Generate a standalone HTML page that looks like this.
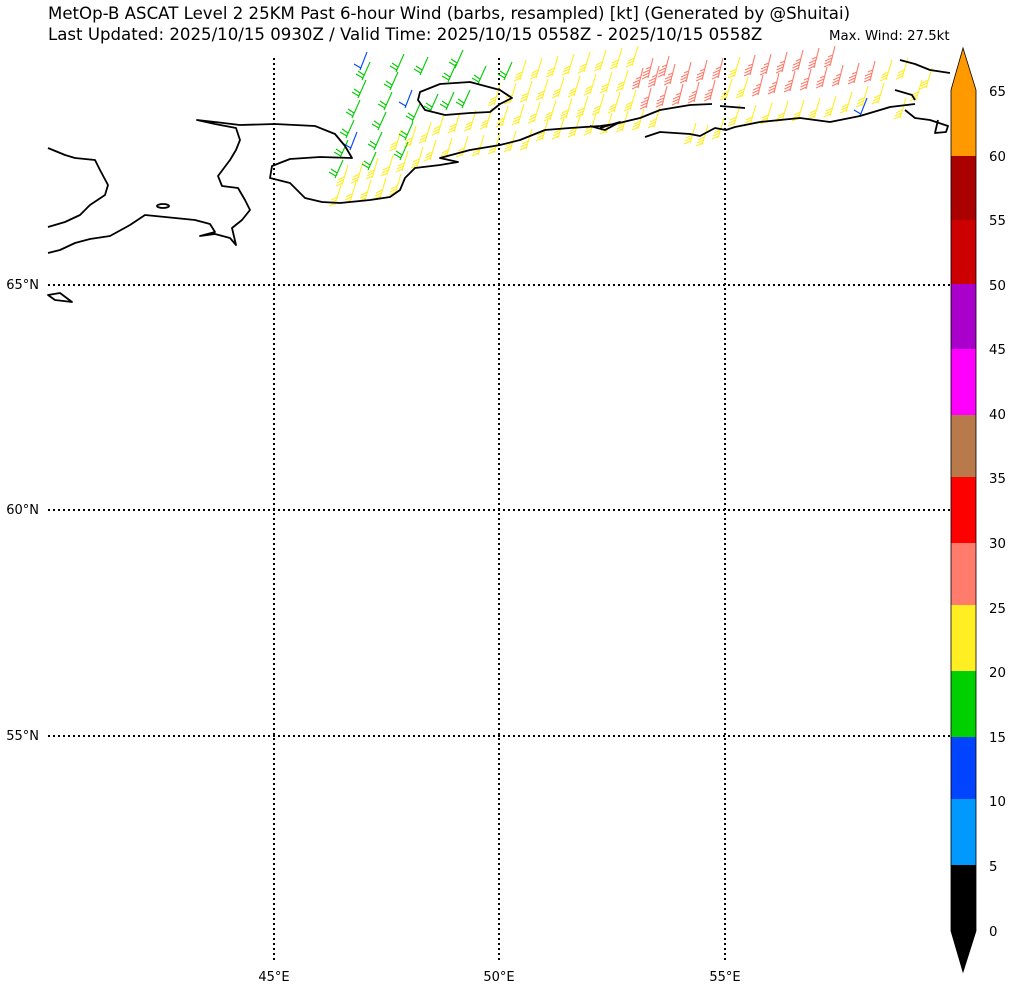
<!DOCTYPE html>
<html><head><meta charset="utf-8"><style>
body{margin:0;background:#fff;width:1010px;height:989px;overflow:hidden;font-family:"DejaVu Sans","Liberation Sans",sans-serif;}
</style></head><body>
<svg width="1010" height="989" viewBox="0 0 1010 989" xmlns="http://www.w3.org/2000/svg" font-family="DejaVu Sans, Liberation Sans, sans-serif">
<defs>
<g id="by" stroke="#ffee22" stroke-width="1.1" fill="none"><path d="M0 0L6 -20M0.5 -2L-6 1M1.4 -5L-5 -2M2.3 -8L-4 -5"/></g>
<g id="br" stroke="#ff7b6b" stroke-width="1.1" fill="none"><path d="M0 0L5 -20M0.4 -2L-6 1M1.2 -5L-5.5 -2M2 -8L-5 -5M2.8 -11L-2 -9"/></g>
<g id="bg" stroke="#00cc00" stroke-width="1.1" fill="none"><path d="M0 0L8 -18M0.8 -2L-6 -6M2 -5L-4 -9"/></g>
<g id="bb" stroke="#0044ff" stroke-width="1.1" fill="none"><path d="M0 0L7 -18M0.8 -2L-6 -6"/></g>
</defs>
<text x="48" y="19" font-size="16.6">MetOp-B ASCAT Level 2 25KM Past 6-hour Wind (barbs, resampled) [kt] (Generated by @Shuitai)</text>
<text x="48" y="40" font-size="16.6">Last Updated: 2025/10/15 0930Z / Valid Time: 2025/10/15 0558Z - 2025/10/15 0558Z</text>
<text x="829" y="40" font-size="13.3">Max. Wind: 27.5kt</text>
<g stroke="#000" stroke-width="2" stroke-dasharray="2,3">
<path d="M274 58V960M499 58V960M725 58V960M48 285H950M48 510H950M48 736H950"/>
</g>
<g font-size="13" text-anchor="end">
<text x="39" y="289">65°N</text><text x="39" y="514">60°N</text><text x="39" y="740">55°N</text>
</g>
<g font-size="13" text-anchor="middle">
<text x="274" y="981">45°E</text><text x="499" y="981">50°E</text><text x="725" y="981">55°E</text>
</g>
<g>
<use href="#by" x="430" y="160"/><use href="#by" x="446" y="158"/><use href="#by" x="462" y="156"/><use href="#by" x="478" y="155"/><use href="#by" x="494" y="153"/><use href="#by" x="510" y="151"/><use href="#by" x="526" y="149"/><use href="#by" x="542" y="140"/><use href="#by" x="558" y="138"/><use href="#by" x="574" y="136"/><use href="#by" x="590" y="134"/><use href="#by" x="606" y="133"/><use href="#by" x="622" y="131"/><use href="#by" x="638" y="129"/><use href="#by" x="654" y="127"/><use href="#by" x="690" y="143"/><use href="#by" x="702" y="145"/><use href="#by" x="718" y="138"/><use href="#by" x="734" y="125"/><use href="#by" x="750" y="125"/><use href="#by" x="766" y="123"/><use href="#by" x="782" y="121"/><use href="#by" x="798" y="120"/><use href="#by" x="814" y="118"/><use href="#by" x="830" y="116"/><use href="#by" x="846" y="112"/><use href="#by" x="862" y="106"/><use href="#by" x="878" y="103"/><use href="#by" x="900" y="118"/><use href="#by" x="916" y="100"/><use href="#by" x="926" y="88"/>
<use href="#by" x="438" y="134"/><use href="#by" x="454" y="132"/><use href="#by" x="470" y="130"/><use href="#by" x="486" y="128"/><use href="#by" x="502" y="126"/><use href="#by" x="518" y="124"/><use href="#by" x="534" y="122"/><use href="#by" x="550" y="120"/><use href="#by" x="566" y="118"/><use href="#by" x="582" y="116"/><use href="#by" x="598" y="114"/><use href="#by" x="614" y="112"/><use href="#by" x="630" y="110"/><use href="#br" x="646" y="108"/><use href="#br" x="662" y="106"/><use href="#br" x="678" y="104"/><use href="#br" x="694" y="102"/><use href="#br" x="710" y="100"/><use href="#by" x="726" y="99"/><use href="#by" x="742" y="97"/><use href="#br" x="758" y="95"/><use href="#br" x="774" y="93"/><use href="#br" x="790" y="91"/><use href="#br" x="806" y="89"/><use href="#br" x="822" y="87"/><use href="#br" x="838" y="85"/><use href="#br" x="854" y="83"/><use href="#br" x="870" y="81"/><use href="#by" x="886" y="80"/><use href="#by" x="902" y="78"/>
<use href="#bg" x="430" y="112"/><use href="#bg" x="446" y="110"/><use href="#bg" x="462" y="108"/><use href="#by" x="494" y="105"/><use href="#by" x="510" y="103"/><use href="#by" x="526" y="101"/><use href="#by" x="542" y="99"/><use href="#by" x="558" y="97"/><use href="#by" x="574" y="96"/><use href="#by" x="590" y="94"/><use href="#by" x="606" y="92"/><use href="#by" x="622" y="90"/><use href="#br" x="638" y="88"/><use href="#br" x="654" y="86"/><use href="#br" x="670" y="84"/><use href="#br" x="686" y="82"/><use href="#br" x="702" y="80"/><use href="#br" x="718" y="78"/><use href="#by" x="734" y="77"/><use href="#br" x="750" y="75"/><use href="#br" x="766" y="74"/><use href="#br" x="782" y="72"/><use href="#br" x="798" y="70"/><use href="#br" x="814" y="68"/><use href="#br" x="830" y="66"/>
<use href="#bg" x="448" y="82"/><use href="#bg" x="478" y="84"/><use href="#bg" x="504" y="80"/><use href="#by" x="520" y="80"/><use href="#by" x="536" y="78"/><use href="#by" x="552" y="76"/><use href="#by" x="568" y="74"/><use href="#by" x="584" y="72"/><use href="#by" x="600" y="70"/><use href="#by" x="616" y="68"/><use href="#by" x="632" y="66"/><use href="#br" x="648" y="78"/><use href="#br" x="664" y="76"/>
<use href="#by" x="335" y="205"/><use href="#by" x="350" y="202"/><use href="#by" x="365" y="200"/><use href="#by" x="380" y="198"/><use href="#by" x="395" y="194"/><use href="#by" x="342" y="185"/><use href="#by" x="357" y="182"/><use href="#by" x="372" y="178"/><use href="#by" x="387" y="175"/><use href="#by" x="402" y="171"/><use href="#by" x="417" y="167"/><use href="#by" x="395" y="150"/><use href="#by" x="410" y="146"/><use href="#by" x="425" y="142"/>
<use href="#bg" x="335" y="178"/><use href="#bg" x="340" y="158"/><use href="#bg" x="346" y="138"/><use href="#bg" x="352" y="118"/><use href="#bg" x="358" y="98"/><use href="#bg" x="362" y="80"/><use href="#bg" x="368" y="170"/><use href="#bg" x="374" y="150"/><use href="#bg" x="378" y="130"/><use href="#bg" x="384" y="110"/><use href="#bg" x="390" y="90"/><use href="#bg" x="396" y="72"/><use href="#bg" x="400" y="160"/><use href="#bg" x="405" y="140"/><use href="#bg" x="412" y="122"/><use href="#bg" x="420" y="75"/><use href="#bg" x="455" y="68"/><use href="#bb" x="350" y="150"/><use href="#bb" x="360" y="70"/><use href="#bb" x="405" y="108"/><use href="#bb" x="860" y="116"/>
</g>
<g fill="none" stroke="#000" stroke-width="1.8" stroke-linejoin="round">
<path d="M48 148L65 155L75 158L95 160L100 170L108 185L105 195L90 205L80 215L65 222L48 227"/>
<path d="M48 253L60 250L75 243L90 239L110 236L130 225L145 215L165 217L195 220L210 224L215 232L200 236L215 234L230 238L236 245L232 228L242 220L250 210L245 200L238 188L222 186L218 176L230 160L236 150L240 140L236 128L215 124L197 120L215 122L240 125L275 124L315 126L335 134L345 146L352 158L320 157L290 159L272 166L270 178L290 183L305 198L322 202L340 203L370 200L390 197L400 190L405 178L415 168L440 165L458 162L440 158L470 150L500 145L520 140L545 130L570 128L600 126L615 124L640 118L660 110L690 105L712 104"/>
<ellipse cx="163" cy="206" rx="6" ry="2"/>
<path d="M420 92L440 84L470 82L500 90L512 98L500 104L490 112L470 113L445 115L425 110L418 100Z"/>
<path d="M645 137L660 132L690 134L700 136L715 128L726 130L735 127L760 122L780 120L800 118L830 122L860 116L890 107L915 104"/>
<path d="M895 90L912 95L915 100M905 110L915 118L930 120L948 126L946 132L935 133L938 120"/>
<path d="M900 60L915 64L930 70L950 73"/>
<path d="M48 295L60 293L72 302L55 300Z"/>
<path d="M590 126L605 130L620 122L600 128M720 106L745 108"/>
</g>
<g stroke="none">
<path d="M951 90L963 48L976 90Z" fill="#ff9900"/>
<rect x="951" y="90" width="25" height="66" fill="#ff9900"/>
<rect x="951" y="156" width="25" height="64" fill="#aa0000"/>
<rect x="951" y="220" width="25" height="64" fill="#cc0000"/>
<rect x="951" y="284" width="25" height="65" fill="#aa00cc"/>
<rect x="951" y="349" width="25" height="66" fill="#ff00ff"/>
<rect x="951" y="415" width="25" height="62" fill="#b87a4b"/>
<rect x="951" y="477" width="25" height="66" fill="#ff0000"/>
<rect x="951" y="543" width="25" height="62" fill="#ff7b6b"/>
<rect x="951" y="605" width="25" height="66" fill="#ffee22"/>
<rect x="951" y="671" width="25" height="66" fill="#00d000"/>
<rect x="951" y="737" width="25" height="62" fill="#0044ff"/>
<rect x="951" y="799" width="25" height="66" fill="#0099ff"/>
<rect x="951" y="865" width="25" height="66" fill="#000"/>
<path d="M951 931L963 972L976 931Z" fill="#000"/>
</g>
<path d="M951 90L963 48L976 90V931L963 972L951 931Z" fill="none" stroke="#000" stroke-width="0.8"/>
<g font-size="13.3">
<text x="989" y="96">65</text><text x="989" y="161">60</text><text x="989" y="225">55</text><text x="989" y="290">50</text><text x="989" y="354">45</text><text x="989" y="419">40</text><text x="989" y="483">35</text><text x="989" y="548">30</text><text x="989" y="613">25</text><text x="989" y="677">20</text><text x="989" y="742">15</text><text x="989" y="806">10</text><text x="989" y="871">5</text><text x="989" y="936">0</text>
</g>
</svg>
</body></html>
